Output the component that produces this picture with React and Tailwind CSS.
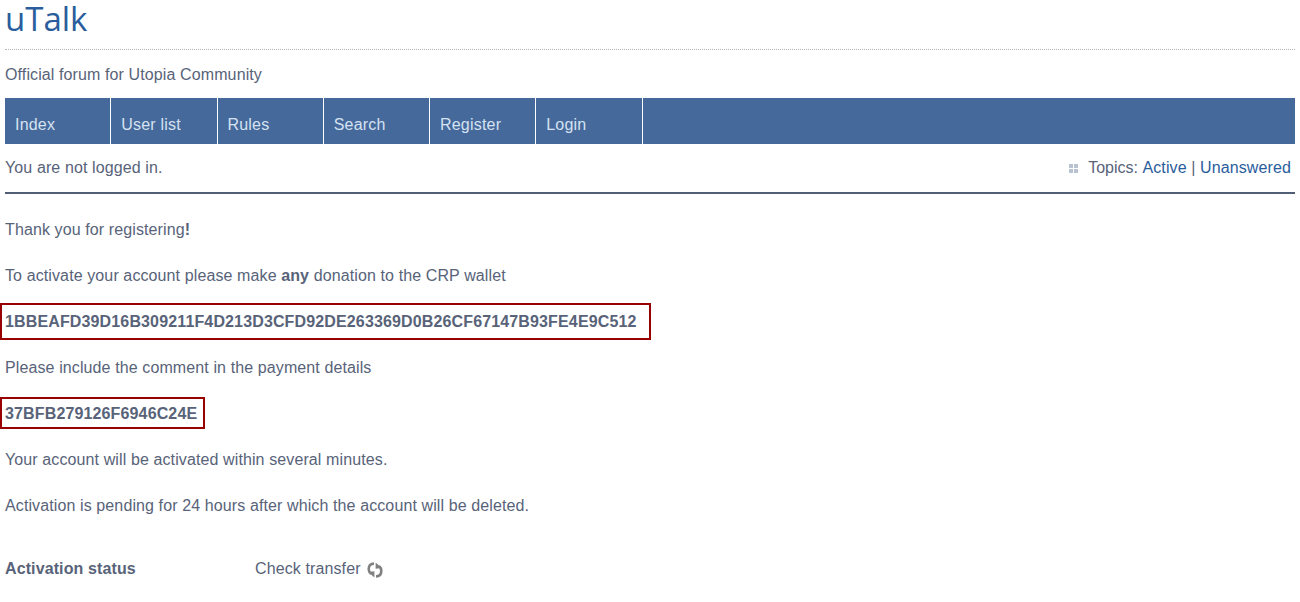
const navItems = ['Index', 'User list', 'Rules', 'Search', 'Register', 'Login'];

function RefreshGlyph() {
  return (
    <svg width="18" height="18" viewBox="0 0 18 18" fill="none" stroke="#808080" strokeWidth="2.6" className="ml-[5px] mt-[2px]">
      <path d="M8 2.6C4.6 2.6 2.7 4.6 2.7 8C2.7 10 3.5 11.8 5 13" />
      <path d="M2.2 11L8.4 10.2V16.6Z" fill="#808080" stroke="none" />
      <path d="M10 15.4C13.4 15.4 15.3 13.4 15.3 10C15.3 8 14.5 6.2 13 5" />
      <path d="M15.8 7L9.6 7.8V1.4Z" fill="#808080" stroke="none" />
    </svg>
  );
}

export default function App() {
  return (
    <div className="w-[1300px] h-[602px] overflow-hidden bg-white font-['Liberation_Sans',Arial,sans-serif] text-base tracking-[0.11px] text-[#586379]">
      <div className="px-[5px]">
        <div className="h-[50px] border-b border-dotted border-[#b5b5b5]">
          <h1 className="font-['Open_Sans',sans-serif] text-[33px] leading-[37px] tracking-normal text-[#2a5d9c]">uTalk</h1>
        </div>
        <p className="h-[48px] pt-[15px] leading-[20px]">Official forum for Utopia Community</p>

        <nav className="flex h-[46px] bg-[#46699b]">
          {navItems.map((item) => (
            <a key={item} className="w-[106.25px] border-r border-white pl-[10px] pt-[16.5px] leading-[20px] tracking-[0.2px] text-[#d5e2f2]">
              {item}
            </a>
          ))}
        </nav>

        <div className="flex h-[50px] items-start justify-between border-b-2 border-[#4f5d75] pt-[14px] leading-[20px]">
          <span>You are not logged in.</span>
          <span className="mr-[4px] flex items-center">
            <span className="mr-[10px] grid grid-cols-2 gap-[1px]">
              <i className="h-1 w-1 bg-[#b9c2d0]" />
              <i className="h-1 w-1 bg-[#b9c2d0]" />
              <i className="h-1 w-1 bg-[#b9c2d0]" />
              <i className="h-1 w-1 bg-[#b9c2d0]" />
            </span>
            <span className="tracking-normal">Topics:&nbsp;</span><a className="text-[#2a5d9c]">Active</a>&nbsp;|&nbsp;<a className="text-[#2a5d9c]">Unanswered</a>
          </span>
        </div>

        <div className="pt-[26px] leading-[20px]">
          <p>Thank you for registering<b>!</b></p>
          <p className="mt-[26px]">To activate your account please make <b>any</b> donation to the CRP wallet</p>
          <div className="-ml-[5px] mt-[17px] w-[651px] border-2 border-[#990000] py-[6.5px] pl-[3px] font-bold leading-[20px] tracking-[0.14px]">
            1BBEAFD39D16B309211F4D213D3CFD92DE263369D0B26CF67147B93FE4E9C512
          </div>
          <p className="mt-[18px]">Please include the comment in the payment details</p>
          <div className="-ml-[5px] mt-[19px] w-[205px] border-2 border-[#990000] pb-[3px] pt-[5px] pl-[3px] font-bold leading-[20px] tracking-[0.14px]">
            37BFB279126F6946C24E
          </div>
          <p className="mt-[21px]">Your account will be activated within several minutes.</p>
          <p className="mt-[26px]">Activation is pending for 24 hours after which the account will be deleted.</p>
          <div className="mt-[43px] flex">
            <b className="w-[250px]">Activation status</b>
            <span className="flex items-center">Check transfer<RefreshGlyph /></span>
          </div>
        </div>
      </div>
    </div>
  );
}
